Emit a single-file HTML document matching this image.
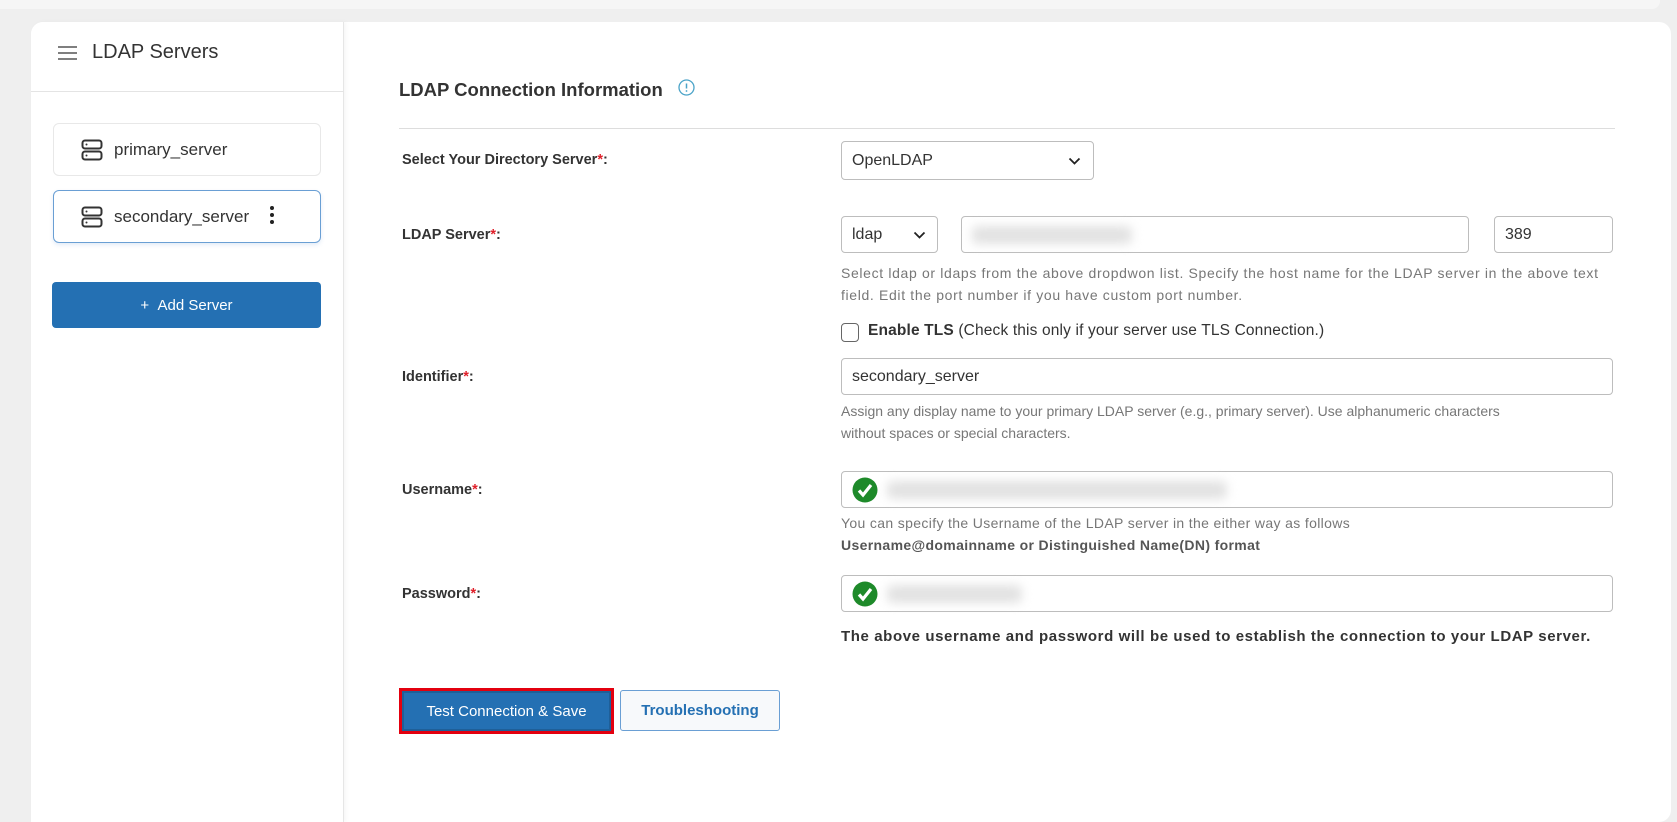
<!DOCTYPE html>
<html><head><meta charset="utf-8"><style>
*{box-sizing:border-box;margin:0;padding:0}
body{width:1677px;height:761px;overflow:hidden;background:#efefef;font-family:"Liberation Sans",sans-serif;color:#333;position:relative}
.a{position:absolute}
.top{left:0;top:0;width:1660px;height:9px;background:#f6f6f6;border-radius:0 0 8px 0}
.card{left:31px;top:22px;width:1640px;height:800px;background:#fff;border-radius:12px}
.side{left:31px;top:22px;width:313px;height:800px;background:#fff;border-right:1px solid #e6e6e6;border-radius:12px 0 0 0;box-shadow:2px 0 4px rgba(0,0,0,.04)}
.srv{left:53px;width:268px;height:53px;border:1px solid #e8e8e8;border-radius:6px;font-size:17px;color:#333;display:flex;align-items:center;padding-left:27px}
.srv svg{margin-right:11px}
.lbl{left:402px;font-size:14.5px;font-weight:bold;color:#333}
.lbl i{color:#e0202a;font-style:normal}
.inp{border:1px solid #bdbdbd;border-radius:4px;background:#fff}
.help{left:841px;font-size:14px;color:#777;line-height:22px}
.blur{background:#e2e2e2;filter:blur(5px);border-radius:6px}
</style></head><body>
<div class="a top"></div>
<div class="a card"></div>
<div class="a side"></div>
<svg class="a" style="left:57px;top:45px" width="21" height="16" viewBox="0 0 21 16"><path d="M1 2h19M1 8h19M1 14h19" stroke="#555" stroke-width="1.6"/></svg>
<div class="a" style="left:92px;top:41px;font-size:20px;color:#333">LDAP Servers</div>
<div class="a" style="left:31px;top:91px;width:313px;height:1px;background:#e4e4e4"></div>

<div class="a srv" style="top:123px"><svg width="22" height="22" viewBox="0 0 22 22"><rect x="1.5" y="1.5" width="19" height="8" rx="2.5" fill="none" stroke="#333" stroke-width="2"/><rect x="1.5" y="12.5" width="19" height="8" rx="2.5" fill="none" stroke="#333" stroke-width="2"/><circle cx="5.5" cy="5.5" r="1" fill="#333"/><circle cx="5.5" cy="16.5" r="1" fill="#333"/></svg>primary_server</div>
<div class="a srv" style="top:190px;border-color:#6a9fd4;box-shadow:0 2px 4px rgba(60,120,200,.15)"><svg width="22" height="22" viewBox="0 0 22 22"><rect x="1.5" y="1.5" width="19" height="8" rx="2.5" fill="none" stroke="#333" stroke-width="2"/><rect x="1.5" y="12.5" width="19" height="8" rx="2.5" fill="none" stroke="#333" stroke-width="2"/><circle cx="5.5" cy="5.5" r="1" fill="#333"/><circle cx="5.5" cy="16.5" r="1" fill="#333"/></svg>secondary_server<svg style="margin-left:20px;margin-top:-4px" width="6" height="20" viewBox="0 0 6 20"><circle cx="3" cy="3" r="2" fill="#222"/><circle cx="3" cy="10" r="2" fill="#222"/><circle cx="3" cy="17" r="2" fill="#222"/></svg></div>
<div class="a" style="left:52px;top:282px;width:269px;height:46px;background:#2470b3;border-radius:4px;color:#fff;font-size:15px;display:flex;align-items:center;justify-content:center">+&nbsp;&nbsp;Add Server</div>

<div class="a" style="left:399px;top:79px;font-size:18.5px;font-weight:bold;color:#333">LDAP Connection Information</div>
<svg class="a" style="left:678px;top:79px" width="17" height="17" viewBox="0 0 17 17"><circle cx="8.5" cy="8.5" r="7.5" fill="none" stroke="#4aa3c8" stroke-width="1.3"/><path d="M8.5 4.5v5" stroke="#4aa3c8" stroke-width="1.5"/><circle cx="8.5" cy="12" r=".9" fill="#4aa3c8"/></svg>
<div class="a" style="left:399px;top:128px;width:1216px;height:1px;background:#ddd"></div>

<div class="a lbl" style="top:152px">Select Your Directory Server<i>*</i>:</div>
<div class="a inp" style="left:841px;top:141px;width:253px;height:39px;font-size:16px;padding:10px 10px">OpenLDAP<svg class="a" style="right:12px;top:15px" width="13" height="8" viewBox="0 0 13 8"><path d="M1.5 1.5l5 5 5-5" fill="none" stroke="#222" stroke-width="1.8"/></svg></div>

<div class="a lbl" style="top:227px">LDAP Server<i>*</i>:</div>
<div class="a inp" style="left:841px;top:216px;width:97px;height:37px;font-size:16px;padding:9px 10px">ldap<svg class="a" style="right:11px;top:14px" width="13" height="8" viewBox="0 0 13 8"><path d="M1.5 1.5l5 5 5-5" fill="none" stroke="#222" stroke-width="1.8"/></svg></div>
<div class="a inp" style="left:961px;top:216px;width:508px;height:37px"><div class="a blur" style="left:10px;top:9px;width:160px;height:18px"></div></div>
<div class="a inp" style="left:1494px;top:216px;width:119px;height:37px;font-size:16px;padding:9px 10px">389</div>
<div class="a help" style="top:262px;width:790px;letter-spacing:0.65px;white-space:nowrap">Select ldap or ldaps from the above dropdwon list. Specify the host name for the LDAP server in the above text<br>field. Edit the port number if you have custom port number.</div>
<div class="a" style="left:841px;top:323px;width:18px;height:19px;border:1.5px solid #666;border-radius:4px"></div>
<div class="a" style="left:868px;top:322px;font-size:15.5px;letter-spacing:0.15px;color:#333"><b>Enable TLS</b> (Check this only if your server use TLS Connection.)</div>

<div class="a lbl" style="top:369px">Identifier<i>*</i>:</div>
<div class="a inp" style="left:841px;top:358px;width:772px;height:37px;font-size:16px;padding:9px 10px">secondary_server</div>
<div class="a help" style="top:400px">Assign any display name to your primary LDAP server (e.g., primary server). Use alphanumeric characters<br>without spaces or special characters.</div>

<div class="a lbl" style="top:482px">Username<i>*</i>:</div>
<div class="a inp" style="left:841px;top:471px;width:772px;height:37px"><svg class="a" style="left:10px;top:5px" width="26" height="26" viewBox="0 0 26 26"><circle cx="13" cy="13" r="12.5" fill="#1e8a2a"/><path d="M7 13.5l4 4.5 8-10" fill="none" stroke="#fff" stroke-width="3.2"/></svg><div class="a blur" style="left:45px;top:9px;width:340px;height:18px"></div></div>
<div class="a help" style="top:512px;letter-spacing:0.35px">You can specify the Username of the LDAP server in the either way as follows<br><b style="color:#555">Username@domainname or Distinguished Name(DN) format</b></div>

<div class="a lbl" style="top:586px">Password<i>*</i>:</div>
<div class="a inp" style="left:841px;top:575px;width:772px;height:37px"><svg class="a" style="left:10px;top:5px" width="26" height="26" viewBox="0 0 26 26"><circle cx="13" cy="13" r="12.5" fill="#1e8a2a"/><path d="M7 13.5l4 4.5 8-10" fill="none" stroke="#fff" stroke-width="3.2"/></svg><div class="a blur" style="left:45px;top:9px;width:135px;height:18px"></div></div>
<div class="a" style="left:841px;top:628px;font-size:15px;letter-spacing:0.6px;font-weight:bold;color:#333">The above username and password will be used to establish the connection to your LDAP server.</div>

<div class="a" style="left:399px;top:688px;width:215px;height:46px;border:3px solid #e3000f;background:#2470b3;color:#fff;font-size:15px;display:flex;align-items:center;justify-content:center;box-shadow:inset 0 0 0 2px #1f5f98">Test Connection &amp; Save</div>
<div class="a" style="left:620px;top:690px;width:160px;height:41px;border:1px solid #6a9fd4;border-radius:3px;background:#f7f9fb;color:#2470b3;font-size:15px;font-weight:bold;display:flex;align-items:center;justify-content:center">Troubleshooting</div>
</body></html>
